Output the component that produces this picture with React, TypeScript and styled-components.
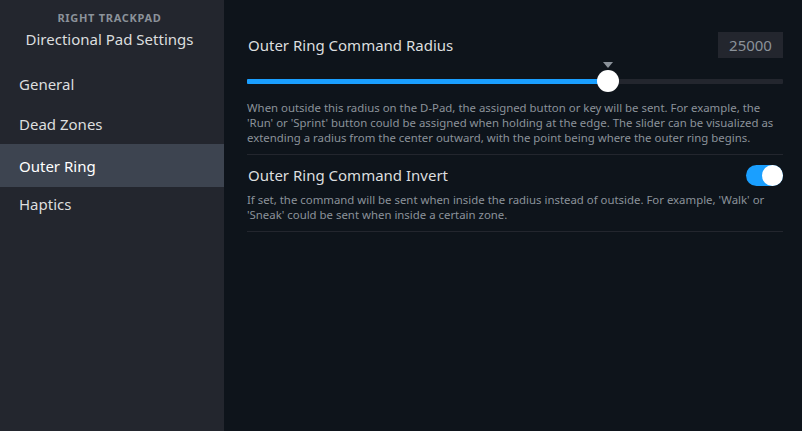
import React from 'react';
import styled, { createGlobalStyle } from 'styled-components';

const GlobalStyle = createGlobalStyle`
  html, body {
    margin: 0;
    padding: 0;
    background: #0e141b;
  }
  body {
    font-family: "Noto Sans", "DejaVu Sans", sans-serif;
  }
`;

const menuItems = ['General', 'Dead Zones', 'Outer Ring', 'Haptics'];

export default function App() {
  const percent = 67.4;

  return (
    <>
      <GlobalStyle />
      <Wrap>
        <Sidebar>
          <SideHeader>
            <Eyebrow>Right Trackpad</Eyebrow>
            <SideTitle>Directional Pad Settings</SideTitle>
          </SideHeader>
          <Menu>
            {menuItems.map((item) => (
              <MenuItem key={item} $active={item === 'Outer Ring'}>
                {item}
              </MenuItem>
            ))}
          </Menu>
        </Sidebar>
        <Main>
          <Setting>
            <SettingHead>
              <SettingTitle>Outer Ring Command Radius</SettingTitle>
              <ValueBox>25000</ValueBox>
            </SettingHead>
            <Slider>
              <Track>
                <Fill style={{ width: `${percent}%` }} />
              </Track>
              <Thumb style={{ left: `${percent}%` }}>
                <Notch />
              </Thumb>
            </Slider>
            <Description>
              When outside this radius on the D-Pad, the assigned button or key will be sent. For example, the
              <br />
              'Run' or 'Sprint' button could be assigned when holding at the edge. The slider can be visualized as
              <br />
              extending a radius from the center outward, with the point being where the outer ring begins.
            </Description>
          </Setting>
          <Setting>
            <SettingHead $compact>
              <SettingTitle>Outer Ring Command Invert</SettingTitle>
              <Toggle $on>
                <Knob />
              </Toggle>
            </SettingHead>
            <Description $tight>
              If set, the command will be sent when inside the radius instead of outside. For example, 'Walk' or
              <br />
              'Sneak' could be sent when inside a certain zone.
            </Description>
          </Setting>
        </Main>
      </Wrap>
    </>
  );
}

const Wrap = styled.div`
  display: flex;
  width: 802px;
  height: 431px;
  overflow: hidden;
  background: #0e141b;
`;

const Sidebar = styled.div`
  width: 224px;
  flex-shrink: 0;
  background: #23262e;
  display: flex;
  flex-direction: column;
`;

const SideHeader = styled.div`
  display: flex;
  flex-direction: column;
  align-items: center;
  padding: 10px 5px 0 0;
`;

const Eyebrow = styled.div`
  font-size: 11px;
  font-weight: 700;
  letter-spacing: 0.7px;
  text-transform: uppercase;
  color: #8b929a;
  line-height: 16px;
`;

const SideTitle = styled.div`
  font-size: 15px;
  color: #dcdedf;
  line-height: 20px;
  margin-top: 3px;
`;

const Menu = styled.div`
  display: flex;
  flex-direction: column;
  margin-top: 15px;
`;

const MenuItem = styled.div<{ $active?: boolean }>`
  height: ${(p) => (p.$active ? '43px' : '40px')};
  margin-bottom: ${(p) => (p.$active ? '-3px' : '0')};
  display: flex;
  align-items: center;
  padding-left: 19px;
  font-size: 15px;
  color: ${(p) => (p.$active ? '#ffffff' : '#dcdedf')};
  background: ${(p) => (p.$active ? '#3d4450' : 'transparent')};
`;

const Main = styled.div`
  flex: 1;
  padding: 31px 19px 0 23px;
  display: flex;
  flex-direction: column;
`;

const Setting = styled.div`
  border-bottom: 1px solid #23262e;
  padding-bottom: 9px;
  margin-bottom: 9px;
`;

const SettingHead = styled.div<{ $compact?: boolean }>`
  display: flex;
  justify-content: space-between;
  align-items: center;
  height: ${(p) => (p.$compact ? '22px' : '27px')};
`;

const SettingTitle = styled.div`
  font-size: 15px;
  color: #dcdedf;
  padding-left: 1px;
`;

const ValueBox = styled.div`
  width: 65px;
  height: 26px;
  box-sizing: border-box;
  background: #23262e;
  color: #8b929a;
  font-size: 15px;
  display: flex;
  align-items: center;
  justify-content: center;
`;

const Slider = styled.div`
  position: relative;
  height: 22px;
  margin-top: 12px;
  display: flex;
  align-items: center;
`;

const Track = styled.div`
  width: 100%;
  height: 5px;
  background: #23262e;
  border-radius: 1px;
  overflow: hidden;
`;

const Fill = styled.div`
  height: 100%;
  background: #1a9fff;
`;

const Thumb = styled.div`
  position: absolute;
  top: 0;
  width: 22px;
  height: 22px;
  margin-left: -11px;
  border-radius: 50%;
  background: #ffffff;
`;

const Notch = styled.div`
  position: absolute;
  left: 50%;
  top: -8px;
  margin-left: -5px;
  width: 0;
  height: 0;
  border-left: 5px solid transparent;
  border-right: 5px solid transparent;
  border-top: 6px solid #8b929a;
`;

const Description = styled.div<{ $tight?: boolean }>`
  font-size: 11.4px;
  line-height: 15px;
  color: #8b929a;
  margin-top: ${(p) => (p.$tight ? '6px' : '8px')};
  white-space: nowrap;
`;

const Toggle = styled.div<{ $on?: boolean }>`
  width: 37px;
  height: 21px;
  border-radius: 11px;
  background: ${(p) => (p.$on ? '#1a9fff' : '#3d4450')};
  display: flex;
  align-items: center;
  justify-content: ${(p) => (p.$on ? 'flex-end' : 'flex-start')};
`;

const Knob = styled.div`
  width: 21px;
  height: 21px;
  border-radius: 50%;
  background: #ffffff;
`;
